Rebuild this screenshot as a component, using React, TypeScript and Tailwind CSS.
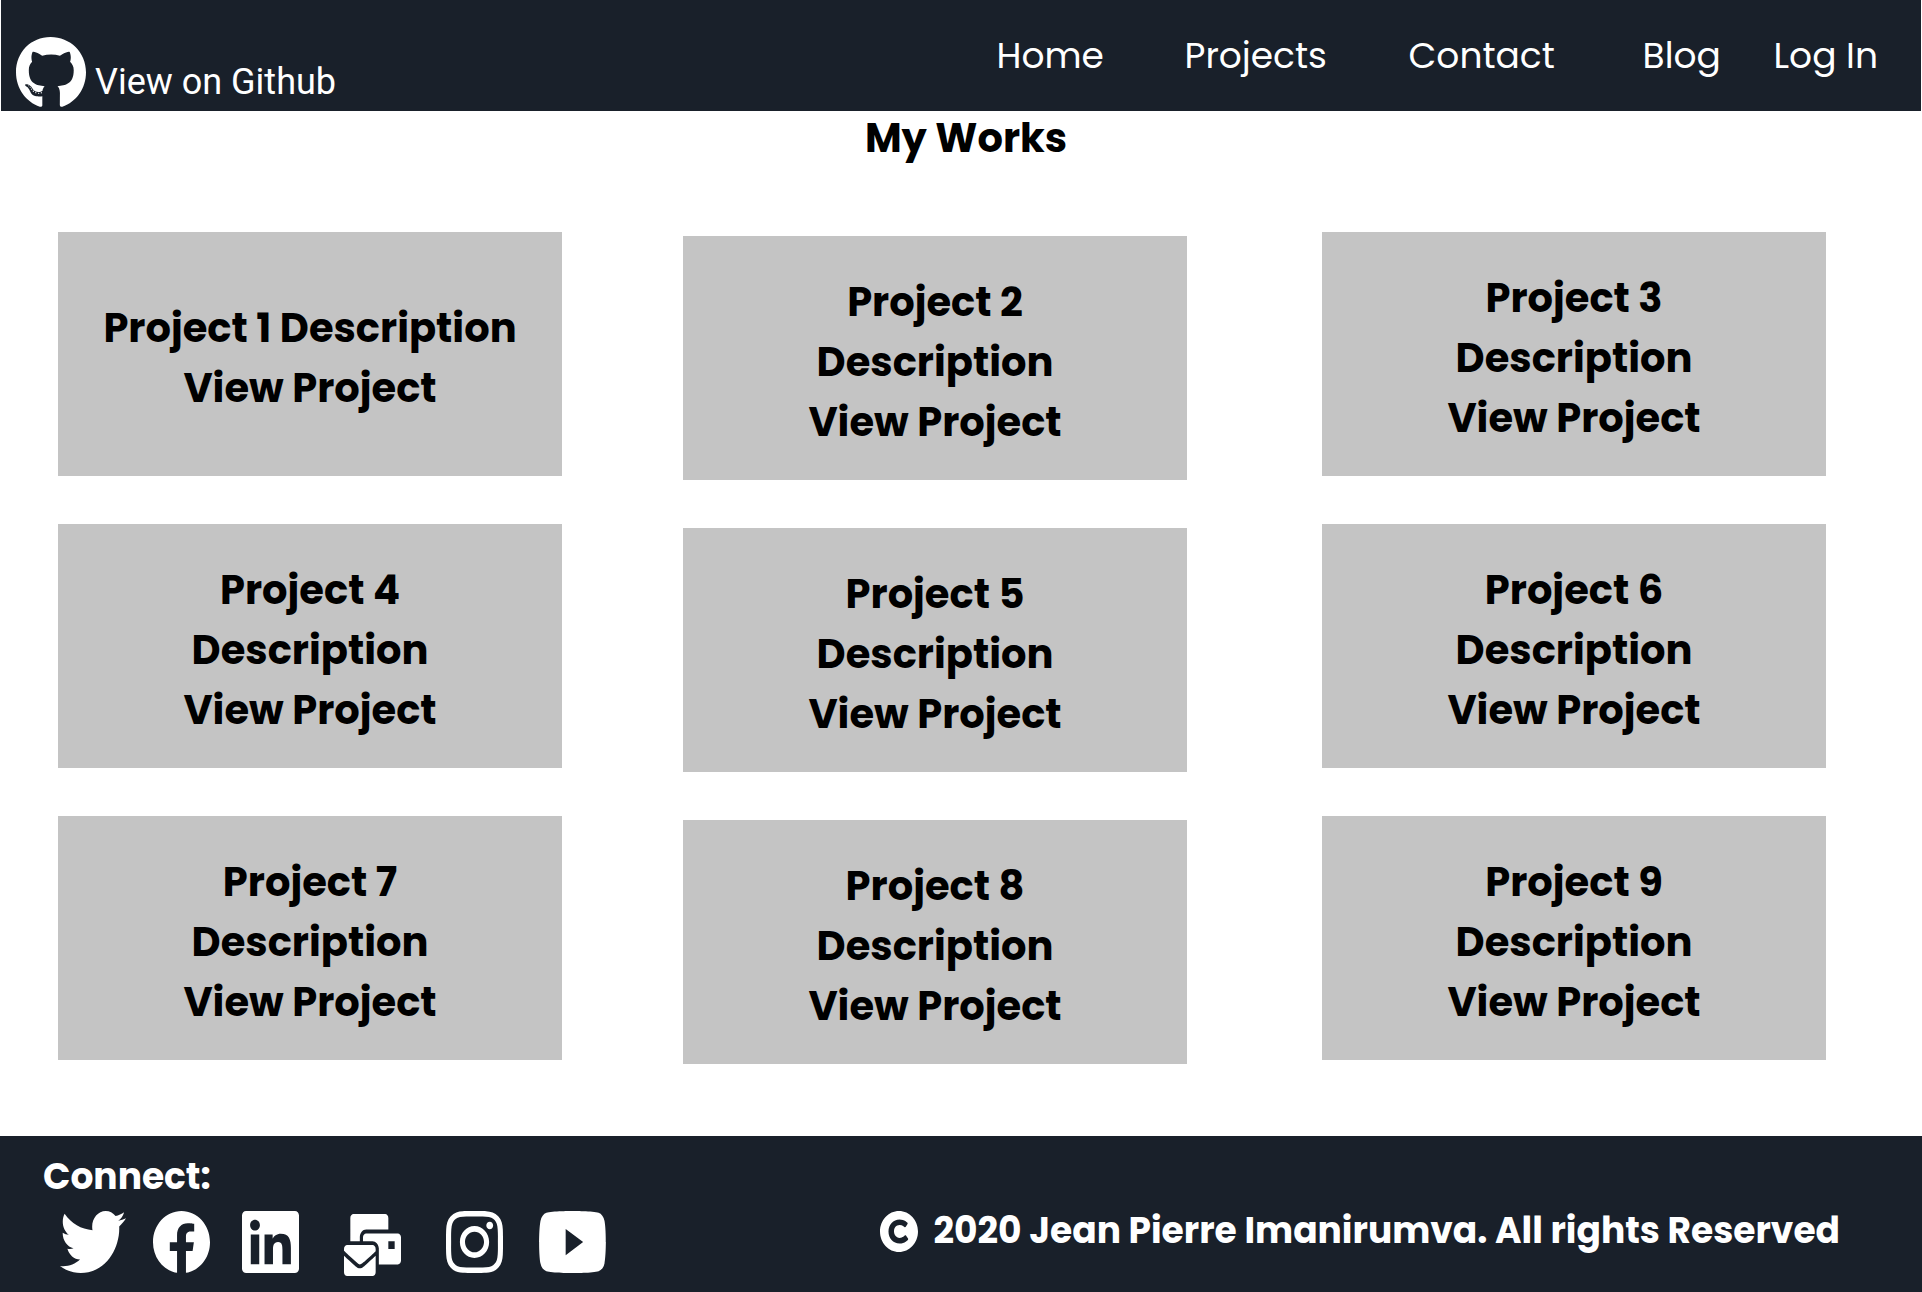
import React from 'react';
import type { IconType } from 'react-icons';
import {
  FaCopyright,
  FaFacebook,
  FaGithub,
  FaInstagram,
  FaLinkedin,
  FaMailBulk,
  FaTwitter,
  FaYoutube,
} from 'react-icons/fa';

type Social = { label: string; Icon: IconType; viewBox: string; className: string };

const socials: Social[] = [
  { label: 'Twitter', Icon: FaTwitter, viewBox: '0 48 512 416', className: 'w-[66px] h-[62px]' },
  { label: 'Facebook', Icon: FaFacebook, viewBox: '8 8 496 494', className: 'ml-[27px] w-[57px] h-[62px]' },
  { label: 'LinkedIn', Icon: FaLinkedin, viewBox: '0 32 448 448', className: 'ml-8 w-[57px] h-[62px]' },
  { label: 'Email', Icon: FaMailBulk, viewBox: '0 0 576 512', className: 'ml-[45px] mt-[3px] w-[57px] h-[62px]' },
  { label: 'Instagram', Icon: FaInstagram, viewBox: '0 32 448 448', className: 'ml-[45px] w-[57px] h-[62px]' },
  { label: 'YouTube', Icon: FaYoutube, viewBox: '14 64 548 384', className: 'ml-9 w-[67px] h-[62px]' },
];

const nav = [
  { label: 'Home', className: 'w-[188px]' },
  { label: 'Projects', className: 'w-[224px]' },
  { label: 'Contact', className: 'w-[234px]' },
  { label: 'Blog', className: 'w-[131px]' },
  { label: 'Log In', className: '' },
];

const columns = [
  { ids: [1, 4, 7], className: 'mr-[121px]' },
  { ids: [2, 5, 8], className: 'mr-[135px] pt-1' },
  { ids: [3, 6, 9], className: '' },
];

function ProjectCard({ id }: { id: number }) {
  return (
    <article className="flex h-[244px] flex-col items-center justify-center bg-[#c4c4c4] pt-2 text-center text-[40px] leading-[60px] font-bold text-black">
      <h2>
        Project {id}
        {id === 1 ? ' ' : <br />}
        Description
      </h2>
      <a href="#project">View Project</a>
    </article>
  );
}

export default function App() {
  return (
    <div className="flex min-h-screen flex-col bg-white font-['Poppins','Inter',sans-serif]">
      <header className="mx-px flex h-[111px] items-start justify-between bg-[#19202a] text-4xl text-white">
        <a href="#github" className="ml-[15px] flex items-start font-['Roboto',sans-serif]">
          <FaGithub viewBox="0 8 496 485" preserveAspectRatio="none" className="mt-[37px] h-[70px] w-[70px]" />
          <span className="mt-[61px] ml-[9px] leading-[42px] font-normal">View on Github</span>
        </a>
        <nav className="mt-[29px] mr-[43px] flex leading-[54px] font-normal">
          {nav.map((item) => (
            <a key={item.label} href="#nav" className={item.className}>
              {item.label}
            </a>
          ))}
        </nav>
      </header>

      <main className="flex-1">
        <h1 className="pt-px pl-[10px] text-center text-[40px] leading-[52px] font-bold text-black">My Works</h1>
        <div className="mt-[68px] flex pr-24 pl-[58px]">
          {columns.map((column) => (
            <section key={column.ids[0]} className={`flex flex-1 flex-col gap-12 ${column.className}`}>
              {column.ids.map((id) => (
                <ProjectCard key={id} id={id} />
              ))}
            </section>
          ))}
        </div>
      </main>

      <footer className="flex h-[156px] items-start justify-between bg-[#19202a] pr-[82px] pl-[43px] text-4xl font-bold text-white">
        <div>
          <h2 className="mt-[14px] leading-[54px]">Connect:</h2>
          <div className="mt-[7px] ml-[17px] flex items-start">
            {socials.map(({ label, Icon, viewBox, className }) => (
              <a key={label} href="#social" aria-label={label} className={className}>
                <Icon viewBox={viewBox} preserveAspectRatio="none" className="h-full w-full" />
              </a>
            ))}
          </div>
        </div>
        <p className="mt-[68px] flex items-center gap-4 leading-[54px] whitespace-nowrap">
          <FaCopyright viewBox="8 8 496 496" preserveAspectRatio="none" className="h-[41px] w-[38px]" />
          2020 Jean Pierre Imanirumva. All rights Reserved
        </p>
      </footer>
    </div>
  );
}
